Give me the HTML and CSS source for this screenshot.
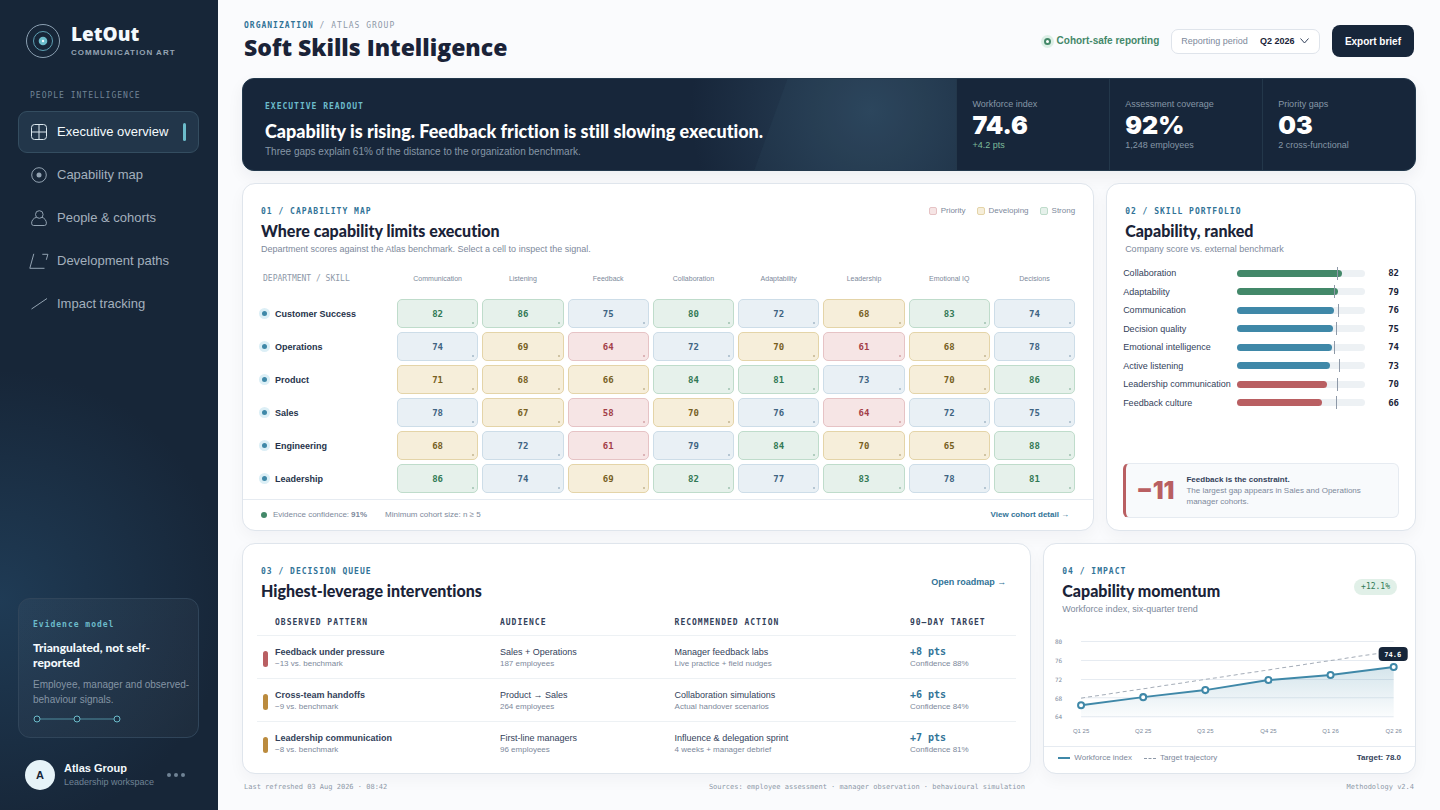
FILE: index.html
```html
<!DOCTYPE html>
<html lang="en">
<head>
  <meta charset="UTF-8" />
  <meta name="viewport" content="width=device-width, initial-scale=1.0"/>
  <title>Soft Skills Intelligence - LetOut</title>
  <link rel="stylesheet" href="styles.css">
</head>
<body>

  <div class="app">
    <aside class="sidebar">
      <div class="brand">
        <svg class="brand-mark" viewBox="0 0 34 34" aria-hidden="true">
          <circle cx="17" cy="17" r="16.5" fill="none" stroke="#8ba0b2"/>
          <circle cx="17" cy="17" r="9.5" fill="none" stroke="#5d9fb2"/>
          <circle cx="17" cy="17" r="4.3" fill="#6cbccb"/>
          <circle cx="17" cy="17" r="1.2" fill="#f2fbff"/>
        </svg>
        <div>
          <div class="brand-name">LetOut</div>
          <div class="brand-sub">COMMUNICATION ART</div>
        </div>
      </div>

      <div class="nav-label">PEOPLE INTELLIGENCE</div>
      <nav class="nav">
        <a href="#" class="nav-item active">
          <svg viewBox="0 0 20 16"><rect x="2.5" y=".5" width="15" height="15" rx="3"/><path d="M10 1v14M3 8h14"/></svg>
          Executive overview
        </a>
        <a href="#" class="nav-item">
          <svg viewBox="0 0 20 16"><circle cx="10" cy="8" r="7.3"/><circle class="solid" cx="10" cy="8" r="2.5"/></svg>
          Capability map
        </a>
        <a href="#" class="nav-item">
          <svg viewBox="0 0 20 16"><circle cx="10.300" cy="4.500" r="3.800"/><path d="M7.500 7.300C4.500 8 2.600 10.500 2.600 13.200q0 2.300 2 2.300h10.800q2 0 2-2.300c0-2.700-1.900-5.200-4.500-5.900"/></svg>
          People &amp; cohorts
        </a>
        <a href="#" class="nav-item">
          <svg viewBox="0 0 20 16"><path d="M4.800.8L.8 15.300H15.500M13.300 1.300h5.600l-1.600 5.500"/></svg>
          Development paths
        </a>
        <a href="#" class="nav-item">
          <svg viewBox="0 0 20 16"><path d="M2.500 13L18 2.500"/></svg>
          Impact tracking
        </a>
      </nav>

      <div class="evidence">
        <div class="evidence-label">Evidence model</div>
        <h3>Triangulated, not self-reported</h3>
        <p>Employee, manager and observed-behaviour signals.</p>
        <svg viewBox="0 0 88 8" width="88" height="8" aria-hidden="true">
          <path d="M7 4h34M47 4h34" stroke="#4f8c9e"/>
          <g fill="#1d3144" stroke="#6cbccb"><circle cx="4" cy="4" r="3"/><circle cx="44" cy="4" r="3"/><circle cx="84" cy="4" r="3"/></g>
        </svg>
      </div>

      <div class="profile">
        <div class="avatar">A</div>
        <div>
          <div class="profile-name">Atlas Group</div>
          <div class="profile-sub">Leadership workspace</div>
        </div>
        <button class="more" aria-label="Workspace menu"><i></i><i></i><i></i></button>
      </div>
    </aside>

    <main class="main">
      <header class="topbar">
        <div>
          <div class="crumbs"><b>ORGANIZATION</b> / ATLAS GROUP</div>
          <h1>Soft Skills Intelligence</h1>
        </div>
        <div class="tools">
          <span class="safe"><i></i>Cohort-safe reporting</span>
          <label class="period">
            <span>Reporting period</span>
            <select id="period">
              <option>Q2 2026</option>
              <option>Q1 2026</option>
            </select>
            <svg viewBox="0 0 9 6" width="9" height="6"><path d="M.5.5l4 4.500 4-4.500" fill="none" stroke="#33415a"/></svg>
          </label>
          <button class="export">Export brief</button>
        </div>
      </header>

      <section class="hero">
        <div class="hero-copy">
          <div class="eyebrow">EXECUTIVE READOUT</div>
          <h2>Capability is rising. Feedback friction is still slowing execution.</h2>
          <p>Three gaps explain 61% of the distance to the organization benchmark.</p>
        </div>
        <div class="metric"><span>Workforce index</span><strong>74.6</strong><small class="up">+4.2 pts</small></div>
        <div class="metric"><span>Assessment coverage</span><strong>92%</strong><small>1,248 employees</small></div>
        <div class="metric"><span>Priority gaps</span><strong>03</strong><small>2 cross-functional</small></div>
      </section>

      <div class="row row-top">
        <section class="card">
          <div class="card-head">
            <div>
              <div class="eyebrow">01 / CAPABILITY MAP</div>
              <h2>Where capability limits execution</h2>
              <p>Department scores against the Atlas benchmark. Select a cell to inspect the signal.</p>
            </div>
            <div class="legend">
              <span><i class="low"></i>Priority</span>
              <span><i class="mid"></i>Developing</span>
              <span><i class="high"></i>Strong</span>
            </div>
          </div>
          <div class="heat-wrap">
            <table class="heat">
              <thead>
                <tr>
                  <th class="dept-head">DEPARTMENT / SKILL</th>
                  <th>Communication</th><th>Listening</th><th>Feedback</th><th>Collaboration</th>
                  <th>Adaptability</th><th>Leadership</th><th>Emotional IQ</th><th>Decisions</th>
                </tr>
              </thead>
              <tbody id="heatBody"></tbody>
            </table>
          </div>
          <div class="card-foot">
            <span class="confidence"><i></i>Evidence confidence: <b>91%</b></span>
            <span>Minimum cohort size: n ≥ 5</span>
            <a href="#" class="link">View cohort detail →</a>
          </div>
        </section>

        <section class="card">
          <div class="card-head">
            <div>
              <div class="eyebrow">02 / SKILL PORTFOLIO</div>
              <h2>Capability, ranked</h2>
              <p>Company score vs. external benchmark</p>
            </div>
          </div>
          <div class="rank" id="rank"></div>
          <div class="callout">
            <strong>−11</strong>
            <div><b>Feedback is the constraint.</b><br>The largest gap appears in Sales and Operations manager cohorts.</div>
          </div>
        </section>
      </div>

      <div class="row row-bottom">
        <section class="card">
          <div class="card-head">
            <div>
              <div class="eyebrow">03 / DECISION QUEUE</div>
              <h2>Highest-leverage interventions</h2>
            </div>
            <a href="#" class="link roadmap">Open roadmap →</a>
          </div>
          <div class="queue-wrap">
            <table class="queue">
              <thead>
                <tr><th>OBSERVED PATTERN</th><th>AUDIENCE</th><th>RECOMMENDED ACTION</th><th>90–DAY TARGET</th></tr>
              </thead>
              <tbody>
                <tr>
                  <td><i class="flag red"></i><b>Feedback under pressure</b><small>−13 vs. benchmark</small></td>
                  <td>Sales + Operations<small>187 employees</small></td>
                  <td>Manager feedback labs<small>Live practice + field nudges</small></td>
                  <td><strong>+8 pts</strong><small>Confidence 88%</small></td>
                </tr>
                <tr>
                  <td><i class="flag"></i><b>Cross-team handoffs</b><small>−9 vs. benchmark</small></td>
                  <td>Product → Sales<small>264 employees</small></td>
                  <td>Collaboration simulations<small>Actual handover scenarios</small></td>
                  <td><strong>+6 pts</strong><small>Confidence 84%</small></td>
                </tr>
                <tr>
                  <td><i class="flag"></i><b>Leadership communication</b><small>−8 vs. benchmark</small></td>
                  <td>First-line managers<small>96 employees</small></td>
                  <td>Influence &amp; delegation sprint<small>4 weeks + manager debrief</small></td>
                  <td><strong>+7 pts</strong><small>Confidence 81%</small></td>
                </tr>
              </tbody>
            </table>
          </div>
        </section>

        <section class="card">
          <div class="card-head">
            <div>
              <div class="eyebrow">04 / IMPACT</div>
              <h2>Capability momentum</h2>
              <p>Workforce index, six-quarter trend</p>
            </div>
            <span class="pill">+12.1%</span>
          </div>
          <svg class="chart" viewBox="0 0 358 112" role="img" aria-label="Workforce index by quarter">
            <defs>
              <linearGradient id="area" x1="0" y1="0" x2="0" y2="1">
                <stop offset="0" stop-color="#3f88a8" stop-opacity=".22"/>
                <stop offset="1" stop-color="#3f88a8" stop-opacity=".02"/>
              </linearGradient>
            </defs>
            <path class="grid" d="M31 11.500H343M31 30.500H343M31 49.500H343M31 67.500H343M31 86.500H343"/>
            <g class="ylab">
              <text x="5" y="14">80</text><text x="5" y="33">76</text><text x="5" y="52">72</text><text x="5" y="71">68</text><text x="5" y="89">64</text>
            </g>
            <path d="M31 75L93 67 155 60 218 50 280 45 343 37V87H31z" fill="url(#area)"/>
            <path class="target" d="M31 68L343 21"/>
            <path class="line" d="M31 75L93 67 155 60 218 50 280 45 343 37"/>
            <g class="dots">
              <circle cx="31" cy="75" r="3"/><circle cx="93" cy="67" r="3"/><circle cx="155" cy="60" r="3"/>
              <circle cx="218" cy="50" r="3"/><circle cx="280" cy="45" r="3"/><circle cx="343" cy="37" r="3"/>
            </g>
            <rect x="328" y="17" width="29" height="14" rx="4" fill="#17263a"/>
            <text class="tip" x="342" y="27">74.6</text>
            <g class="xlab">
              <text x="31" y="103">Q1 25</text><text x="93" y="103">Q2 25</text><text x="155" y="103">Q3 25</text>
              <text x="218" y="103">Q4 25</text><text x="280" y="103">Q1 26</text><text x="343" y="103">Q2 26</text>
            </g>
          </svg>
          <div class="card-foot chart-foot">
            <span><i class="key"></i>Workforce index</span>
            <span><i class="key dashed"></i>Target trajectory</span>
            <b>Target: 78.0</b>
          </div>
        </section>
      </div>

      <footer class="page-foot">
        <span>Last refreshed 03 Aug 2026 · 08:42</span>
        <span>Sources: employee assessment · manager observation · behavioural simulation</span>
        <span>Methodology v2.4</span>
      </footer>
    </main>
  </div>

  <script>
    const departments = [
      { name: "Customer Success", scores: [82, 86, 75, 80, 72, 68, 83, 74] },
      { name: "Operations", scores: [74, 69, 64, 72, 70, 61, 68, 78] },
      { name: "Product", scores: [71, 68, 66, 84, 81, 73, 70, 86] },
      { name: "Sales", scores: [78, 67, 58, 70, 76, 64, 72, 75] },
      { name: "Engineering", scores: [68, 72, 61, 79, 84, 70, 65, 88] },
      { name: "Leadership", scores: [86, 74, 69, 82, 77, 83, 78, 81] }
    ];

    const skills = [
      { name: "Collaboration", score: 82, benchmark: 78 },
      { name: "Adaptability", score: 79, benchmark: 76 },
      { name: "Communication", score: 76, benchmark: 79 },
      { name: "Decision quality", score: 75, benchmark: 77 },
      { name: "Emotional intelligence", score: 74, benchmark: 76 },
      { name: "Active listening", score: 73, benchmark: 80 },
      { name: "Leadership communication", score: 70, benchmark: 78 },
      { name: "Feedback culture", score: 66, benchmark: 77 }
    ];

    function band(score) {
      if (score >= 80) return 'high';
      if (score >= 72) return 'steady';
      if (score >= 65) return 'mid';
      return 'low';
    }

    document.getElementById('heatBody').innerHTML = departments.map(dept => `
      <tr>
        <th scope="row">${dept.name}</th>
        ${dept.scores.map(s => `<td><button class="${band(s)}">${s}</button></td>`).join('')}
      </tr>
    `).join('');

    document.getElementById('rank').innerHTML = skills.map(skill => {
      const tone = skill.score >= 79 ? 'green' : skill.score > 70 ? 'blue' : 'red';
      return `
        <div class="rank-row">
          <span>${skill.name}</span>
          <div class="track">
            <div class="fill ${tone}" style="width: ${skill.score}%"></div>
            <i style="left: ${skill.benchmark}%"></i>
          </div>
          <b>${skill.score}</b>
        </div>
      `;
    }).join('');
  </script>

</body>
</html>
```
FILE: styles.css
```css
* {
  box-sizing: border-box;
}

body {
  margin: 0;
  font-family: "Liberation Sans", Arial, sans-serif;
  font-size: 9px;
  line-height: 12px;
  color: #33415a;
  background: #fafbfd;
}

h1, h2, h3, p {
  margin: 0;
}

h2, h3 {
  font-family: Lato, "Open Sans", sans-serif;
  font-variant-ligatures: none;
}

h1, .brand-name {
  font-family: "Open Sans", sans-serif;
}

.metric strong, .callout strong {
  font-family: Inter, sans-serif;
}

button, select {
  font-family: inherit;
  cursor: pointer;
}

a {
  text-decoration: none;
}

small {
  display: block;
  font-size: 8px;
  line-height: 11px;
}

.app {
  display: grid;
  grid-template-columns: 218px minmax(0, 1fr);
  min-height: 100vh;
}

/* sidebar */
.sidebar {
  display: flex;
  flex-direction: column;
  padding: 24px 19px 20px 18px;
  color: #94a3b3;
  background:
    radial-gradient(circle 230px at 0 600px, #1f3b55, rgba(31, 59, 85, 0)),
    #172638;
}

.brand {
  display: flex;
  align-items: center;
  gap: 11px;
  padding-left: 8px;
}

.brand-mark {
  width: 34px;
  height: 34px;
}

.brand-name {
  font-size: 19px;
  font-weight: 800;
  line-height: 20px;
  color: #f4fafd;
}

.brand-sub {
  margin-top: 4px;
  font-size: 8px;
  font-weight: bold;
  line-height: 10px;
  letter-spacing: 1px;
}

.nav-label, .crumbs, .eyebrow, .evidence-label, .queue th {
  font-family: "DejaVu Sans Mono", monospace;
  font-size: 8px;
  line-height: 12px;
  letter-spacing: 1px;
}

.nav-label {
  margin: 32px 0 9px 12px;
  color: #708395;
}

.nav {
  display: flex;
  flex-direction: column;
  gap: 1px;
}

.nav-item {
  display: flex;
  align-items: center;
  gap: 8px;
  height: 42px;
  padding-left: 10px;
  border: 1px solid transparent;
  border-radius: 9px;
  font-size: 13px;
  color: #a3b0bd;
}

.nav-item svg {
  width: 20px;
  height: 16px;
  fill: none;
  stroke: #93a3b2;
}

.nav-item .solid {
  fill: #93a3b2;
  stroke: none;
}

.nav-item.active {
  color: #f4fafd;
  background: #22364a;
  border-color: #344d60;
}

.nav-item.active svg {
  stroke: #dce8ef;
}

.nav-item.active::after {
  content: "";
  width: 3px;
  height: 18px;
  margin: 0 12px 0 auto;
  border-radius: 2px;
  background: #6cbccb;
}

.evidence {
  margin-top: auto;
  padding: 20px 4px 14px 14px;
  border: 1px solid #30455a;
  border-radius: 12px;
  background: linear-gradient(145deg, rgba(255, 255, 255, 0.04), rgba(255, 255, 255, 0.03));
}

.evidence-label {
  font-weight: bold;
  color: #6cbccb;
}

.evidence h3 {
  max-width: 150px;
  margin: 9px 0 7px;
  font-size: 12px;
  font-weight: 900;
  line-height: 15px;
  color: #f4fafd;
}

.evidence p {
  margin-bottom: 8px;
  font-size: 10px;
  line-height: 15px;
  color: #8494a4;
}

.evidence svg {
  display: block;
}

.profile {
  display: flex;
  align-items: center;
  gap: 9px;
  margin-top: 22px;
  padding-left: 7px;
}

.avatar {
  width: 30px;
  height: 30px;
  border-radius: 50%;
  font-size: 11px;
  font-weight: bold;
  line-height: 30px;
  text-align: center;
  color: #172638;
  background: #e6f3f8;
}

.profile-name {
  font-size: 11px;
  font-weight: bold;
  line-height: 15px;
  color: #f4fafd;
}

.profile-sub {
  line-height: 13px;
  color: #708395;
}

.more {
  display: flex;
  gap: 3px;
  margin: 0 14px 0 auto;
  padding: 0;
  border: 0;
  background: none;
}

.more i {
  width: 4px;
  height: 4px;
  border-radius: 50%;
  background: #708395;
}

/* main column */
.main {
  display: flex;
  flex-direction: column;
  gap: 12px;
  padding: 18px 24px 12px;
}

.topbar {
  display: flex;
  justify-content: space-between;
  align-items: center;
  height: 48px;
  padding: 0 2px 2px;
}

.crumbs {
  color: #8e99a8;
}

.crumbs b {
  color: #317397;
}

h1 {
  font-size: 23px;
  font-weight: 800;
  line-height: 30px;
  color: #1a2338;
}

.tools {
  display: flex;
  align-items: center;
  gap: 12px;
}

.safe {
  display: flex;
  align-items: center;
  gap: 6px;
  font-size: 10px;
  font-weight: bold;
  color: #438869;
}

.safe i {
  width: 7px;
  height: 7px;
  border: 2px solid #438869;
  border-radius: 50%;
  background: #ffffff;
  box-shadow: 0 0 0 3px #dcefe6;
}

.period {
  display: flex;
  align-items: center;
  height: 25px;
  padding: 0 10px 0 9px;
  border: 1px solid #dfe4eb;
  border-radius: 7px;
  background: #ffffff;
  color: #7d899b;
}

.period select {
  appearance: none;
  margin: 0 5px 0 12px;
  padding: 0;
  border: 0;
  background: none;
  font-size: 9px;
  font-weight: bold;
  color: #1a2338;
}

.export {
  height: 32px;
  padding: 0 13px;
  border: 0;
  border-radius: 8px;
  font-size: 10px;
  font-weight: bold;
  color: #ffffff;
  background: #17263a;
}

/* readout */
.hero {
  display: grid;
  grid-template-columns: 14fr 3fr 3fr 3fr;
  height: 93px;
  border: 1px solid #22384c;
  border-radius: 12px;
  overflow: hidden;
  color: #8696a6;
  background: #17263a;
  box-shadow: 0 6px 16px rgba(23, 38, 58, 0.06);
}

.hero-copy {
  position: relative;
  padding: 22px 22px 0;
  background: radial-gradient(circle 180px at 88% 35%, #2a4259, rgba(42, 66, 89, 0));
}

.hero-copy::after {
  content: "";
  position: absolute;
  top: 0;
  right: 0;
  bottom: 0;
  width: 202px;
  background: rgba(90, 150, 170, 0.05);
  clip-path: polygon(33px 0, 100% 0, 100% 100%, 0 100%);
}

.hero .eyebrow {
  font-weight: bold;
  color: #6cbccb;
}

.hero h2 {
  margin: 7px 0 4px;
  font-size: 18px;
  font-weight: 900;
  line-height: 22px;
  color: #ffffff;
}

.hero p {
  font-size: 10px;
}

.metric {
  display: flex;
  flex-direction: column;
  padding: 19px 15px 0;
  border-left: 1px solid #23374a;
}

.metric strong {
  font-size: 25px;
  font-weight: 900;
  line-height: 30px;
  color: #ffffff;
}

.metric small {
  font-size: 9px;
}

.metric .up {
  color: #7dbb9b;
}

/* cards */
.row {
  display: grid;
  gap: 12px;
}

.row-top {
  grid-template-columns: minmax(0, 11fr) minmax(0, 4fr);
}

.row-bottom {
  grid-template-columns: minmax(0, 36fr) minmax(0, 17fr);
}

.card {
  display: flex;
  flex-direction: column;
  border: 1px solid #dfe5ec;
  border-radius: 13px;
  background: #ffffff;
  box-shadow: 0 6px 16px rgba(23, 38, 58, 0.04);
}

.card-head {
  display: flex;
  justify-content: space-between;
  padding: 22px 18px 0;
}

.card .eyebrow {
  font-weight: bold;
  color: #317397;
}

.card h2 {
  margin: 3px 0 2px;
  font-size: 16px;
  font-weight: 900;
  line-height: 20px;
  color: #1a2338;
}

.card-head p {
  color: #7d899b;
}

.legend {
  display: flex;
  gap: 11px;
  height: 10px;
  font-size: 8px;
  color: #7d899b;
}

.legend span, .card-foot span {
  display: flex;
  align-items: center;
  gap: 4px;
}

.legend i {
  width: 8px;
  height: 8px;
  border-width: 1px;
  border-style: solid;
  border-radius: 2px;
}

.low {
  color: #a33e48;
  background: #f6e5e5;
  border-color: #e6c3c5;
}

.mid {
  color: #77601f;
  background: #f6eeda;
  border-color: #e4d4a8;
}

.high {
  color: #327955;
  background: #e6f1eb;
  border-color: #bfdccb;
}

.steady {
  color: #3f6482;
  background: #e9f0f5;
  border-color: #cddde8;
}

.heat-wrap {
  padding: 6px 16px 4px;
}

.heat, .queue {
  width: 100%;
  border-collapse: collapse;
  table-layout: fixed;
}

.heat thead th {
  height: 36px;
  padding: 0;
  font-size: 7px;
  font-weight: normal;
  color: #7d899b;
}

.heat thead .dept-head {
  width: 136px;
  padding-left: 4px;
  text-align: left;
  font-family: "DejaVu Sans Mono", monospace;
  font-size: 8px;
  color: #8e99a8;
}

.heat tbody th {
  position: relative;
  padding: 0 0 0 16px;
  text-align: left;
  color: #26334b;
}

.heat tbody th::before {
  content: "";
  position: absolute;
  top: 14px;
  left: 3px;
  width: 5px;
  height: 5px;
  border-radius: 50%;
  background: #3f88a8;
  box-shadow: 0 0 0 3px #dceff6;
}

.heat td {
  height: 33px;
  padding: 0 2px;
}

.heat button {
  position: relative;
  display: block;
  width: 100%;
  height: 29px;
  padding: 0;
  border-width: 1px;
  border-style: solid;
  border-radius: 5px;
  font-family: "DejaVu Sans Mono", monospace;
  font-size: 9px;
  font-weight: bold;
}

.heat button::after {
  content: "";
  position: absolute;
  right: 3px;
  bottom: 3px;
  width: 2px;
  height: 2px;
  border-radius: 50%;
  background: currentColor;
  opacity: 0.4;
}

.card-foot {
  display: flex;
  align-items: center;
  gap: 18px;
  height: 31px;
  margin-top: auto;
  padding: 0 24px 0 18px;
  border-top: 1px solid #e6ebf1;
  font-size: 8px;
  color: #7d899b;
}

.card-foot .confidence {
  gap: 2px;
}

.confidence i {
  width: 6px;
  height: 6px;
  margin-right: 4px;
  border-radius: 50%;
  background: #438869;
}

.link {
  margin-left: auto;
  font-weight: bold;
  color: #317397;
}

.roadmap {
  padding: 10px 6px 0 0;
}

/* ranked skills */
.rank {
  display: grid;
  grid-auto-rows: 1fr;
  height: 148px;
  margin: 9px 16px 16px;
}

.rank-row {
  display: grid;
  grid-template-columns: 106px 1fr 26px;
  align-items: center;
  gap: 8px;
  white-space: nowrap;
}

.rank-row b {
  text-align: right;
  font-family: "DejaVu Sans Mono", monospace;
  color: #1a2338;
}

.track {
  position: relative;
  height: 7px;
  border-radius: 4px;
  background: #edf1f4;
}

.track i {
  position: absolute;
  top: -3px;
  width: 1px;
  height: 13px;
  background: #8e99a8;
}

.fill {
  height: 7px;
  border-radius: 4px;
}

.green { background: #438869; }
.blue { background: #3f88a8; }
.red { background: #b95f62; }

.callout {
  display: flex;
  align-items: center;
  gap: 12px;
  min-height: 55px;
  margin: auto 16px 12px;
  padding: 0 10px;
  border: 1px solid #e6ebf1;
  border-left: 3px solid #b95f62;
  border-radius: 6px;
  font-size: 8px;
  line-height: 11px;
  color: #7d899b;
  background: #f8fafc;
}

.callout strong {
  font-size: 24px;
  font-weight: 900;
  color: #b95f62;
}

.callout b {
  color: #33415a;
}

/* decision queue */
.queue-wrap {
  padding: 7px 14px 9px;
}

.queue th {
  height: 25px;
  padding: 2px 0 0;
  text-align: left;
}

.queue th:first-child {
  width: 32%;
  padding-left: 18px;
}

.queue th:nth-child(2) {
  width: 23%;
}

.queue th:nth-child(3) {
  width: 31%;
}

.queue td {
  position: relative;
  height: 43px;
  padding: 10px 0 0;
  border-top: 1px solid #edf1f4;
  vertical-align: top;
}

.queue td:first-child {
  padding-left: 18px;
}

.queue td small {
  color: #7d899b;
}

.queue strong {
  font-family: "DejaVu Sans Mono", monospace;
  font-size: 10px;
  color: #317397;
}

.flag {
  position: absolute;
  top: 15px;
  left: 6px;
  width: 5px;
  height: 16px;
  border-radius: 3px;
  background: #bb8b3e;
}

.flag.red {
  background: #b95f62;
}

/* momentum chart */
.pill {
  align-self: flex-start;
  margin-top: 13px;
  padding: 2px 7px;
  border-radius: 8px;
  font-family: "DejaVu Sans Mono", monospace;
  font-size: 8px;
  color: #327955;
  background: #e1f0e8;
}

.chart {
  display: block;
  margin: 15px 6px 4px;
}

.chart text {
  font-size: 6px;
  fill: #7d899b;
}

.chart .grid {
  stroke: #e6ebf1;
}

.chart .ylab text {
  font-family: "DejaVu Sans Mono", monospace;
}

.chart .xlab text, .chart .tip {
  text-anchor: middle;
}

.chart .tip {
  font-family: "DejaVu Sans Mono", monospace;
  font-size: 7px;
  font-weight: bold;
  fill: #ffffff;
}

.chart .target {
  stroke: #a6aeb9;
  stroke-dasharray: 4 3;
}

.chart .line {
  fill: none;
  stroke: #3f88a8;
  stroke-width: 2;
}

.chart .dots {
  fill: #ffffff;
  stroke: #3f88a8;
  stroke-width: 2;
}

.chart-foot {
  gap: 12px;
  height: 27px;
  padding: 0 14px 4px;
}

.chart-foot b {
  margin-left: auto;
  color: #33415a;
}

.key {
  width: 12px;
  border-top: 2px solid #3f88a8;
}

.key.dashed {
  border-top: 1px dashed #8e99a8;
}

.page-foot {
  display: flex;
  justify-content: space-between;
  margin-top: -5px;
  padding: 0 2px;
  font-family: "DejaVu Sans Mono", monospace;
  font-size: 7px;
  color: #8e99a8;
}
```
